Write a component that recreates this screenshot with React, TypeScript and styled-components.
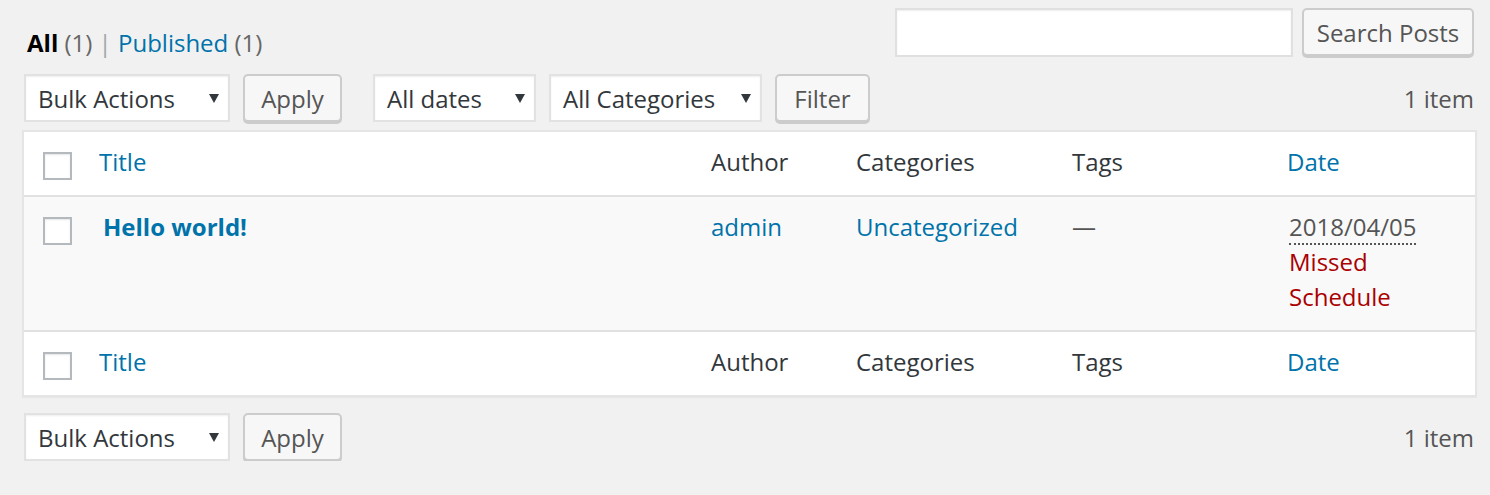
import React from "react";
import styled, { createGlobalStyle } from "styled-components";

const GlobalStyle = createGlobalStyle`
  html, body { margin: 0; padding: 0; }
  body {
    background: #f1f1f1;
    font-family: "Open Sans", "Noto Sans", sans-serif;
    font-size: 24px;
    color: #32373c;
    -webkit-font-smoothing: antialiased;
  }
  * { box-sizing: border-box; }
`;

const Page = styled.div`
  padding: 8px 16px 0 22px;
`;

const TopBar = styled.div`
  display: flex;
  justify-content: space-between;
  align-items: flex-start;
`;

const SubSubSub = styled.ul`
  list-style: none;
  margin: 17px 0 0 5px;
  padding: 0;
  display: flex;
  line-height: 35px;
  color: #666;
`;

const SubItem = styled.li`
  white-space: pre;
`;

const SubLink = styled.a<{ $current?: boolean }>`
  color: ${(p) => (p.$current ? "#000" : "#0073aa")};
  font-weight: ${(p) => (p.$current ? 700 : 400)};
  text-decoration: none;
`;

const Sep = styled.span`
  color: #a0a5aa;
`;

const SearchBox = styled.div`
  display: flex;
  gap: 9px;
`;

const SearchInput = styled.input`
  width: 398px;
  height: 49px;
  border: 2px solid #e0e0e0;
  background: #fff;
  box-shadow: inset 0 1px 2px rgba(0, 0, 0, 0.07);
  font: inherit;
  padding: 0 10px;
  outline: none;
`;

const Button = styled.button<{ $w: number }>`
  width: ${(p) => p.$w}px;
  height: 48px;
  border: 2px solid #cccccc;
  border-radius: 5px;
  background: #f7f7f7;
  box-shadow: 0 2px 0 #cccccc;
  color: #555;
  font-family: inherit;
  font-size: 24px;
  line-height: 35px;
  padding: 0;
  cursor: pointer;
`;

const TableNav = styled.div<{ $top?: boolean }>`
  display: flex;
  align-items: center;
  height: 48px;
  margin-top: ${(p) => (p.$top ? "14px" : "16px")};
  margin-bottom: ${(p) => (p.$top ? "8px" : "0")};
  padding-left: 2px;
`;

const Actions = styled.div`
  display: flex;
  align-items: center;
  gap: 13px;
  margin-right: 31px;
`;

const SelectBox = styled.div<{ $w: number }>`
  width: ${(p) => p.$w}px;
  height: 48px;
  display: flex;
  align-items: center;
  justify-content: space-between;
  padding: 0 9px 0 12px;
  background: #fff;
  border: 2px solid #e2e2e2;
  box-shadow: inset 0 1px 2px rgba(0, 0, 0, 0.07);
  color: #32373c;
  line-height: 35px;
  white-space: nowrap;
`;

const Caret = styled.svg`
  width: 10px;
  height: 9px;
  flex: none;
`;

const Count = styled.div`
  margin-left: auto;
  color: #555;
  line-height: 35px;
`;

const Table = styled.table`
  width: 1451px;
  table-layout: fixed;
  border-collapse: separate;
  border-spacing: 0;
  background: #fff;
  border: 2px solid #e5e5e5;
  box-shadow: 0 1px 1px rgba(0, 0, 0, 0.04);
`;

const Row = styled.tr<{ $alt?: boolean }>`
  background: ${(p) => (p.$alt ? "#f9f9f9" : "#fff")};
`;

const Cell = styled.td<{ $pb?: number; $line?: "top" | "bottom" }>`
  vertical-align: top;
  padding: 12px 8px ${(p) => p.$pb ?? 15}px 12px;
  line-height: 35px;
  text-align: left;
  font-weight: 400;
  ${(p) => (p.$line === "bottom" ? "border-bottom: 2px solid #e1e1e1;" : "")}
  ${(p) => (p.$line === "top" ? "border-top: 2px solid #e1e1e1;" : "")}
`;

const CbCell = styled.td<{ $pb?: number; $line?: "top" | "bottom" }>`
  vertical-align: top;
  padding: 20px 0 ${(p) => p.$pb ?? 15}px 19px;
  ${(p) => (p.$line === "bottom" ? "border-bottom: 2px solid #e1e1e1;" : "")}
  ${(p) => (p.$line === "top" ? "border-top: 2px solid #e1e1e1;" : "")}
`;

const Check = styled.span`
  display: block;
  width: 29px;
  height: 28px;
  border: 2px solid #b4b9be;
  background: #fff;
  box-shadow: inset 0 1px 2px rgba(0, 0, 0, 0.1);
`;

const HeadLink = styled.a`
  color: #0073aa;
  text-decoration: none;
`;

const TitleLink = styled.a`
  color: #0073aa;
  font-weight: 700;
  text-decoration: none;
  margin-left: 4px;
`;

const DataLink = styled.a`
  color: #0073aa;
  text-decoration: none;
`;

const Dash = styled.span`
  color: #555;
`;

const DateAbbr = styled.abbr`
  color: #555;
  text-decoration: none;
  border-bottom: 2px dotted #555;
  margin-left: 2px;
`;

const Missed = styled.span`
  display: block;
  color: #a00;
  margin-left: 2px;
`;

const cols = [63, 612, 145, 216, 215, 200];

const CaretIcon = () => (
  <Caret viewBox="0 0 10 9">
    <path d="M0 0 H10 L5 9 Z" fill="#32373c" />
  </Caret>
);

const HeaderRow = ({ line }: { line: "top" | "bottom" }) => {
  const pb = 15;
  return (
    <Row>
      <CbCell as={line === "bottom" ? "th" : "td"} $line={line} $pb={pb}>
        <Check />
      </CbCell>
      <Cell as="th" $line={line} $pb={pb}>
        <HeadLink href="#">Title</HeadLink>
      </Cell>
      <Cell as="th" $line={line} $pb={pb}>Author</Cell>
      <Cell as="th" $line={line} $pb={pb}>Categories</Cell>
      <Cell as="th" $line={line} $pb={pb}>Tags</Cell>
      <Cell as="th" $line={line} $pb={pb}>
        <HeadLink href="#">Date</HeadLink>
      </Cell>
    </Row>
  );
};

const Nav = ({ top }: { top?: boolean }) => (
  <TableNav $top={top}>
    <Actions>
      <SelectBox $w={206}>
        <span>Bulk Actions</span>
        <CaretIcon />
      </SelectBox>
      <Button $w={99}>Apply</Button>
    </Actions>
    {top && (
      <Actions>
        <SelectBox $w={163}>
          <span>All dates</span>
          <CaretIcon />
        </SelectBox>
        <SelectBox $w={213}>
          <span>All Categories</span>
          <CaretIcon />
        </SelectBox>
        <Button $w={95}>Filter</Button>
      </Actions>
    )}
    <Count>1 item</Count>
  </TableNav>
);

export default function App() {
  return (
    <>
      <GlobalStyle />
      <Page>
        <TopBar>
          <SubSubSub>
            <SubItem>
              <SubLink href="#" $current>All</SubLink> (1) <Sep>|</Sep>{" "}
            </SubItem>
            <SubItem>
              <SubLink href="#">Published</SubLink> (1)
            </SubItem>
          </SubSubSub>
          <SearchBox>
            <SearchInput type="search" aria-label="Search Posts" />
            <Button $w={172}>Search Posts</Button>
          </SearchBox>
        </TopBar>
        <Nav top />
        <Table>
          <colgroup>
            {cols.map((w, i) => (
              <col key={i} style={{ width: w }} />
            ))}
          </colgroup>
          <thead>
            <HeaderRow line="bottom" />
          </thead>
          <tbody>
            <Row $alt>
              <CbCell $pb={16}>
                <Check />
              </CbCell>
              <Cell $pb={16}>
                <TitleLink href="#">Hello world!</TitleLink>
              </Cell>
              <Cell $pb={16}>
                <DataLink href="#">admin</DataLink>
              </Cell>
              <Cell $pb={16}>
                <DataLink href="#">Uncategorized</DataLink>
              </Cell>
              <Cell $pb={16}>
                <Dash>—</Dash>
              </Cell>
              <Cell $pb={16}>
                <DateAbbr title="2018/04/05 9:00:00 am">2018/04/05</DateAbbr>
                <Missed>Missed</Missed>
                <Missed>Schedule</Missed>
              </Cell>
            </Row>
          </tbody>
          <tfoot>
            <HeaderRow line="top" />
          </tfoot>
        </Table>
        <Nav />
      </Page>
    </>
  );
}
